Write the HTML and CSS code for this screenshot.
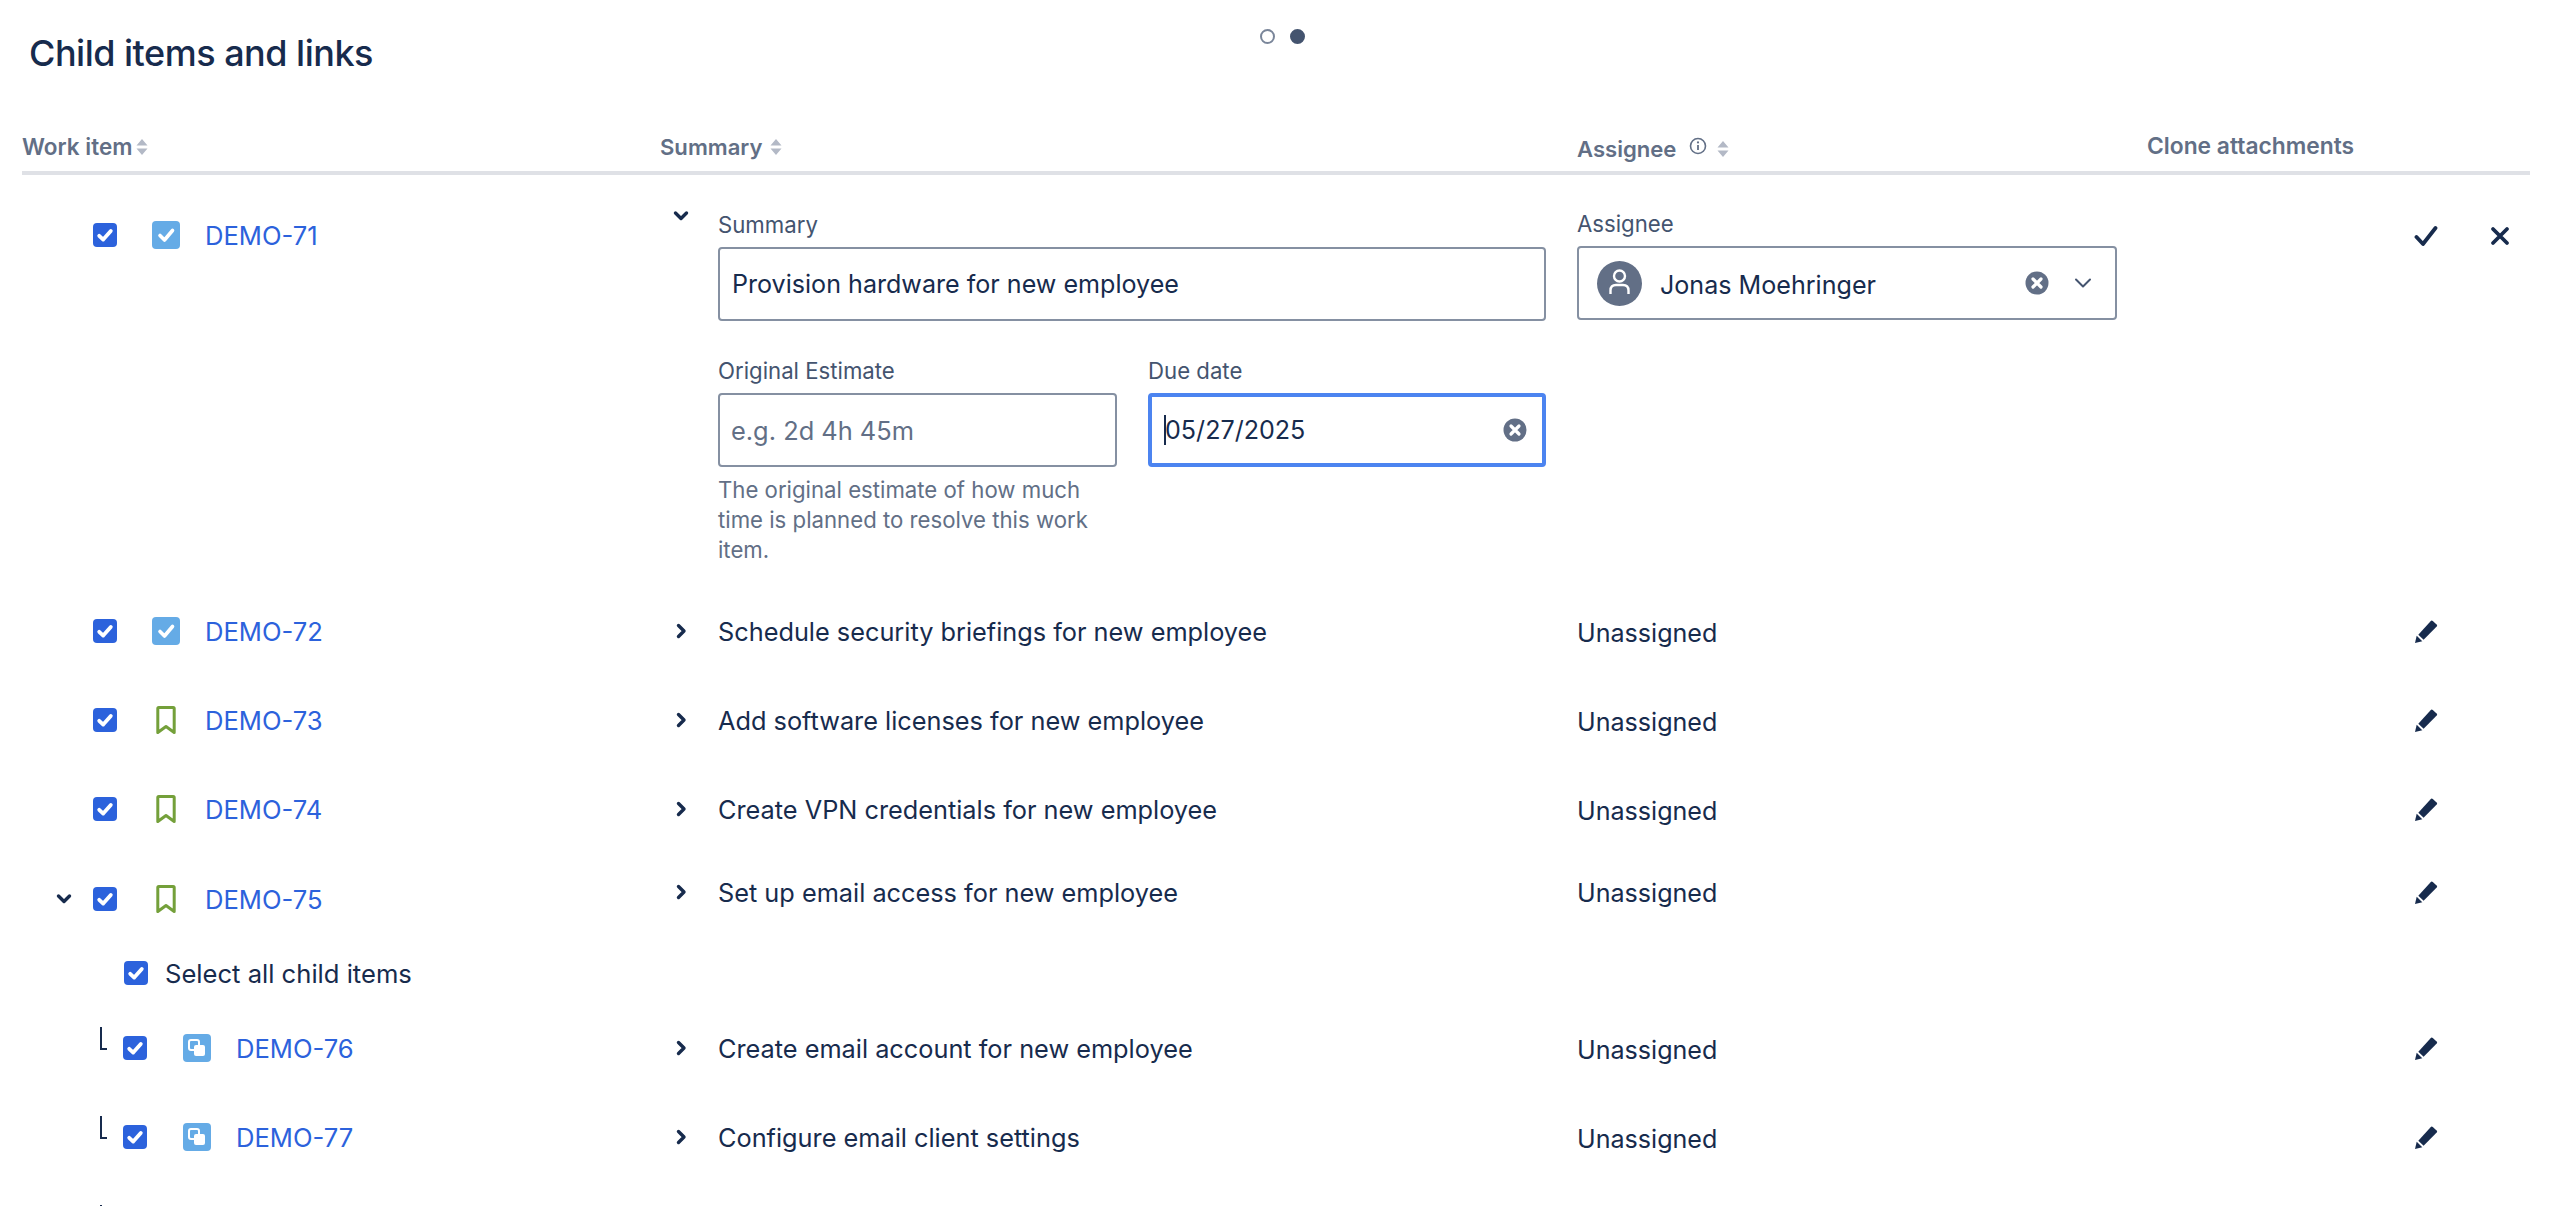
FILE: index.html
```html
<!DOCTYPE html>
<html lang="en">
<head>
<meta charset="utf-8">
<title>Child items and links</title>
<link rel="stylesheet" href="styles.css">
</head>
<body>
<svg class="defs" width="0" height="0" aria-hidden="true">
  <symbol id="tick" viewBox="0 0 24 24"><path d="M6.200 12.800l4 3.800 7.600-8.600" fill="none" stroke="#fff" stroke-width="3.800" stroke-linecap="round" stroke-linejoin="round"/></symbol>
  <symbol id="sort" viewBox="0 0 12 16"><path d="M6 0l5.500 6.500H.5zM6 16L.5 9.500h11z" fill="#B3B9C6"/></symbol>
  <symbol id="right" viewBox="0 0 16 16"><path d="M5.500 2.500L11 8l-5.500 5.500" fill="none" stroke="#172B4D" stroke-width="3.400" stroke-linecap="round" stroke-linejoin="round"/></symbol>
  <symbol id="down" viewBox="0 0 16 16"><path d="M2.500 5L8 10.500 13.500 5" fill="none" stroke="#172B4D" stroke-width="3.400" stroke-linecap="round" stroke-linejoin="round"/></symbol>
  <symbol id="pencil" viewBox="0 0 24 24"><path d="M4.300 15.800L16.600 2.200q1-1.100 2.200-.1l3.800 3.300q1.100 1 .1 2.100L9.600 20.800z" fill="#172B4D"/><path d="M1 24l1.700-7.300 5.600 5.600z" fill="#172B4D"/></symbol>
  <symbol id="bookmark" viewBox="0 0 20 28"><path d="M1.800 2.500q0-1 1-1h14.400q1 0 1 1v24l-8.200-6-8.200 6z" fill="none" stroke="#74A03A" stroke-width="3" stroke-linejoin="round"/></symbol>
  <symbol id="clear" viewBox="0 0 24 24"><circle cx="12" cy="12" r="11.500" fill="#626F86"/><path d="M8 8l8 8M16 8l-8 8" stroke="#fff" stroke-width="3.200" stroke-linecap="round"/></symbol>
  <symbol id="sub" viewBox="0 0 28 28"><rect width="28" height="28" rx="4" fill="#65ABE6"/><rect x="6" y="6" width="10" height="10" rx="2" fill="none" stroke="#fff" stroke-width="2"/><rect x="11" y="11" width="11" height="11" rx="2" fill="#fff"/></symbol>
  <symbol id="task" viewBox="0 0 28 28"><rect width="28" height="28" rx="4" fill="#65ABE6"/><path d="M8 14.500l4.500 4.500 8-9.500" fill="none" stroke="#fff" stroke-width="3.600" stroke-linecap="round" stroke-linejoin="round"/></symbol>
</svg>

<div class="dots"><span class="dot"></span><span class="dot dot-on"></span></div>

<h1 class="title">Child items and links</h1>

<div class="grid head">
  <div class="th th-key">Work item<svg class="sort"><use href="#sort"/></svg></div>
  <div class="th th-key th-sum">Summary<svg class="sort"><use href="#sort"/></svg></div>
  <div class="th th-ass">Assignee
    <svg class="info" viewBox="0 0 18 18"><circle cx="9" cy="9" r="7.500" fill="none" stroke="#626F86" stroke-width="1.600"/><path d="M9 8v5" stroke="#626F86" stroke-width="1.800"/><circle cx="9" cy="5.400" r="1.100" fill="#626F86"/></svg>
    <svg class="sort"><use href="#sort"/></svg></div>
  <div class="th th-clone">Clone attachments</div>
</div>

<div class="grid row-edit">
  <div class="key key-edit">
    <span class="slot"></span>
    <svg class="check"><use href="#tick"/></svg>
    <svg class="type"><use href="#task"/></svg>
    <a class="link">DEMO-71</a>
  </div>
  <div class="sum-edit">
    <svg class="chev chev-down"><use href="#down"/></svg>
    <div class="form">
      <label class="lab">Summary</label>
      <div class="field"><span>Provision hardware for new employee</span></div>
      <div class="form-pair">
        <div class="pair-col">
          <label class="lab">Original Estimate</label>
          <div class="field field-ph"><span>e.g. 2d 4h 45m</span></div>
          <p class="help">The original estimate of how much time is planned to resolve this work item.</p>
        </div>
        <div class="pair-col">
          <label class="lab">Due date</label>
          <div class="field field-focus"><i class="caret"></i><span>05/27/2025</span><svg class="clear clear-date"><use href="#clear"/></svg></div>
        </div>
      </div>
    </div>
  </div>
  <div class="ass-edit">
    <label class="lab">Assignee</label>
    <div class="field field-select">
      <svg class="avatar" viewBox="0 0 45 45"><circle cx="22.500" cy="22.500" r="22.500" fill="#626F86"/><circle cx="22.500" cy="15" r="5.500" fill="none" stroke="#fff" stroke-width="2.400"/><path d="M13.500 33v-3.500q0-5.500 5.500-5.500h7q5.500 0 5.500 5.500V33" fill="none" stroke="#fff" stroke-width="2.400"/></svg>
      <span class="who">Jonas Moehringer</span>
      <svg class="clear"><use href="#clear"/></svg>
      <svg class="select-arrow" viewBox="0 0 20 20"><path d="M3 6.500l7 7 7-7" fill="none" stroke="#44546F" stroke-width="2" stroke-linecap="round" stroke-linejoin="round"/></svg>
    </div>
  </div>
  <div class="actions actions-edit">
    <svg class="act" viewBox="0 0 24 24"><path d="M2.500 13l6.500 7L21.500 4" fill="none" stroke="#172B4D" stroke-width="3.800" stroke-linecap="round" stroke-linejoin="round"/></svg>
    <svg class="act act-x" viewBox="0 0 20 20"><path d="M3 3l14 14M17 3L3 17" fill="none" stroke="#172B4D" stroke-width="3.800" stroke-linecap="round"/></svg>
  </div>
</div>

<div class="grid row">
  <div class="key"><span class="slot"></span><svg class="check"><use href="#tick"/></svg><svg class="type"><use href="#task"/></svg><a class="link">DEMO-72</a></div>
  <div class="sum"><svg class="chev"><use href="#right"/></svg>Schedule security briefings for new employee</div>
  <div class="ass">Unassigned</div>
  <div class="actions"><svg class="act"><use href="#pencil"/></svg></div>
</div>

<div class="grid row">
  <div class="key"><span class="slot"></span><svg class="check"><use href="#tick"/></svg><svg class="type type-book"><use href="#bookmark"/></svg><a class="link">DEMO-73</a></div>
  <div class="sum"><svg class="chev"><use href="#right"/></svg>Add software licenses for new employee</div>
  <div class="ass">Unassigned</div>
  <div class="actions"><svg class="act"><use href="#pencil"/></svg></div>
</div>

<div class="grid row row-short">
  <div class="key"><span class="slot"></span><svg class="check"><use href="#tick"/></svg><svg class="type type-book"><use href="#bookmark"/></svg><a class="link">DEMO-74</a></div>
  <div class="sum"><svg class="chev"><use href="#right"/></svg>Create VPN credentials for new employee</div>
  <div class="ass">Unassigned</div>
  <div class="actions"><svg class="act"><use href="#pencil"/></svg></div>
</div>

<div class="grid row row-parent">
  <div class="key key-parent"><svg class="slot-chev"><use href="#down"/></svg><svg class="check"><use href="#tick"/></svg><svg class="type type-book"><use href="#bookmark"/></svg><a class="link">DEMO-75</a></div>
  <div class="sum"><svg class="chev"><use href="#right"/></svg>Set up email access for new employee</div>
  <div class="ass ass-parent">Unassigned</div>
  <div class="actions"><svg class="act"><use href="#pencil"/></svg></div>
</div>

<div class="select-all"><svg class="check"><use href="#tick"/></svg><span>Select all child items</span></div>

<div class="grid row">
  <div class="key key-child"><i class="elbow"></i><svg class="check"><use href="#tick"/></svg><svg class="type"><use href="#sub"/></svg><a class="link">DEMO-76</a></div>
  <div class="sum"><svg class="chev"><use href="#right"/></svg>Create email account for new employee</div>
  <div class="ass">Unassigned</div>
  <div class="actions"><svg class="act"><use href="#pencil"/></svg></div>
</div>

<div class="grid row">
  <div class="key key-child"><i class="elbow"></i><svg class="check"><use href="#tick"/></svg><svg class="type"><use href="#sub"/></svg><a class="link">DEMO-77</a></div>
  <div class="sum"><svg class="chev"><use href="#right"/></svg>Configure email client settings</div>
  <div class="ass">Unassigned</div>
  <div class="actions"><svg class="act"><use href="#pencil"/></svg></div>
</div>

<div class="tail"><i class="tail-tip"></i></div>
</body>
</html>
```
FILE: styles.css
```css
html, body { margin: 0; padding: 0; }
body {
  width: 2560px;
  height: 1206px;
  overflow: hidden;
  position: relative;
  background: #fff;
  color: #172B4D;
  font-family: Inter, "Liberation Sans", sans-serif;
  font-size: 25.1px;
}
.defs { position: absolute; }
.dots { position: absolute; top: 29px; left: 1260px; display: flex; gap: 15px; }
.dot { width: 15px; height: 15px; box-sizing: border-box; border-radius: 50%; border: 2px solid #7A869A; background: #fff; }
.dot-on { background: #44546F; border-color: #44546F; }
.title { margin: 31px 0 0 29px; height: 44px; font-size: 36px; line-height: 44px; font-weight: 500; letter-spacing: -0.5px; }

.grid { display: grid; grid-template-columns: 638px 917px 570px 383px; margin-left: 22px; width: 2508px; }

.head { height: 96px; padding-top: 57px; box-sizing: border-box; }
.th { display: flex; align-items: center; height: 28px; font-size: 22.5px; line-height: 28px; font-weight: 600; color: #626F86; }
.th-key { margin-top: 1px; }
.th-ass { margin-top: 3px; font-size: 22.1px; }
.th-sum { font-size: 22.1px; }
.th-sum .sort { margin-left: 7px; }
.th-clone { font-size: 22.8px; }
.sort { width: 12px; height: 16px; margin-left: 4px; }
.info { width: 18px; height: 18px; margin-left: 13px; margin-top: -7px; }
.th-ass .sort { margin-left: 10px; }

.row-edit { border-top: 4px solid #DFE1E6; height: 440px; box-sizing: border-box; align-items: start; }
.row { height: 89px; align-items: start; }
.row-short { height: 83px; }
.row-parent { height: 81px; }

.key { display: flex; align-items: center; height: 40px; }
.slot { width: 71px; }
.slot-chev { width: 16px; height: 16px; margin-left: 34px; margin-right: 21px; }
.key-edit { margin-top: 40px; }
.key-parent { margin-top: 7px; }
.key-child { padding-left: 78px; }
.check { width: 24px; height: 24px; flex: none; background: #2C62DC; border-radius: 4px; }
.type { width: 28px; height: 28px; flex: none; margin-left: 35px; margin-right: 25px; }
.key-child .type { margin-left: 36px; }
.type-book { width: 20px; padding: 0 4px; }
.link { color: #2C62DC; font-size: 25.6px; }
.elbow {
  width: 5px; height: 21px; flex: none; align-self: flex-start; margin-top: -1px; margin-right: 16px;
  border-left: 2px solid #172B4D; border-bottom: 2px solid #172B4D; box-sizing: content-box;
}
.tail { height: 0; padding-left: 100px; }
.tail-tip { display: block; width: 2px; height: 1px; margin-top: -1px; background: #172B4D; }

.sum { display: flex; align-items: center; height: 40px; padding-left: 13px; font-size: 25.3px; }
.chev { width: 16px; height: 16px; flex: none; margin-right: 29px; }
.ass { height: 40px; line-height: 40px; margin-top: 2px; }
.ass-parent { margin-top: 1px; }
.actions { display: flex; justify-content: flex-end; align-items: center; height: 40px; padding-right: 92px; }
.act { width: 24px; height: 24px; flex: none; }

.sum-edit { display: flex; padding-left: 13px; }
.chev-down { margin-top: 33px; }
.form { width: 828px; padding-top: 35px; }
.lab { display: block; font-size: 22.2px; line-height: 30px; color: #44546F; margin-bottom: 7px; }
.field {
  display: flex; align-items: center; height: 74px; box-sizing: border-box; padding-left: 12px;
  border: 2px solid #8590A2; border-radius: 4px; color: #172B4D;
}
.form-pair { display: grid; grid-template-columns: 399px 398px; column-gap: 31px; margin-top: 35px; }
.form-pair .lab { margin-bottom: 7px; }
.field-ph { color: #626F86; padding-left: 11px; font-size: 25.4px; }
.field-focus { border: 4px solid #4C84F0; padding-left: 12px; padding-right: 15px; }
.caret { width: 2px; height: 30px; background: #172B4D; margin-right: -1px; }
.clear { width: 24px; height: 24px; flex: none; }
.clear-date { margin-left: auto; }
.help { margin: 8px 0 0; font-size: 22.2px; line-height: 30px; color: #626F86; }

.ass-edit { width: 540px; padding-top: 34px; }
.ass-edit .lab { margin-bottom: 7px; }
.field-select { padding-left: 18px; padding-right: 20px; }
.avatar { width: 45px; height: 45px; flex: none; margin-right: 18px; }
.who { flex: 1; padding-top: 4px; }
.select-arrow { width: 20px; height: 20px; flex: none; margin-left: 24px; margin-right: 2px; }
.actions-edit { margin-top: 41px; padding-right: 20px; gap: 52px; }
.act-x { width: 20px; height: 20px; }

.select-all { display: flex; align-items: center; gap: 17px; height: 40px; margin: 0 0 35px 124px; font-size: 25.6px; }
```
